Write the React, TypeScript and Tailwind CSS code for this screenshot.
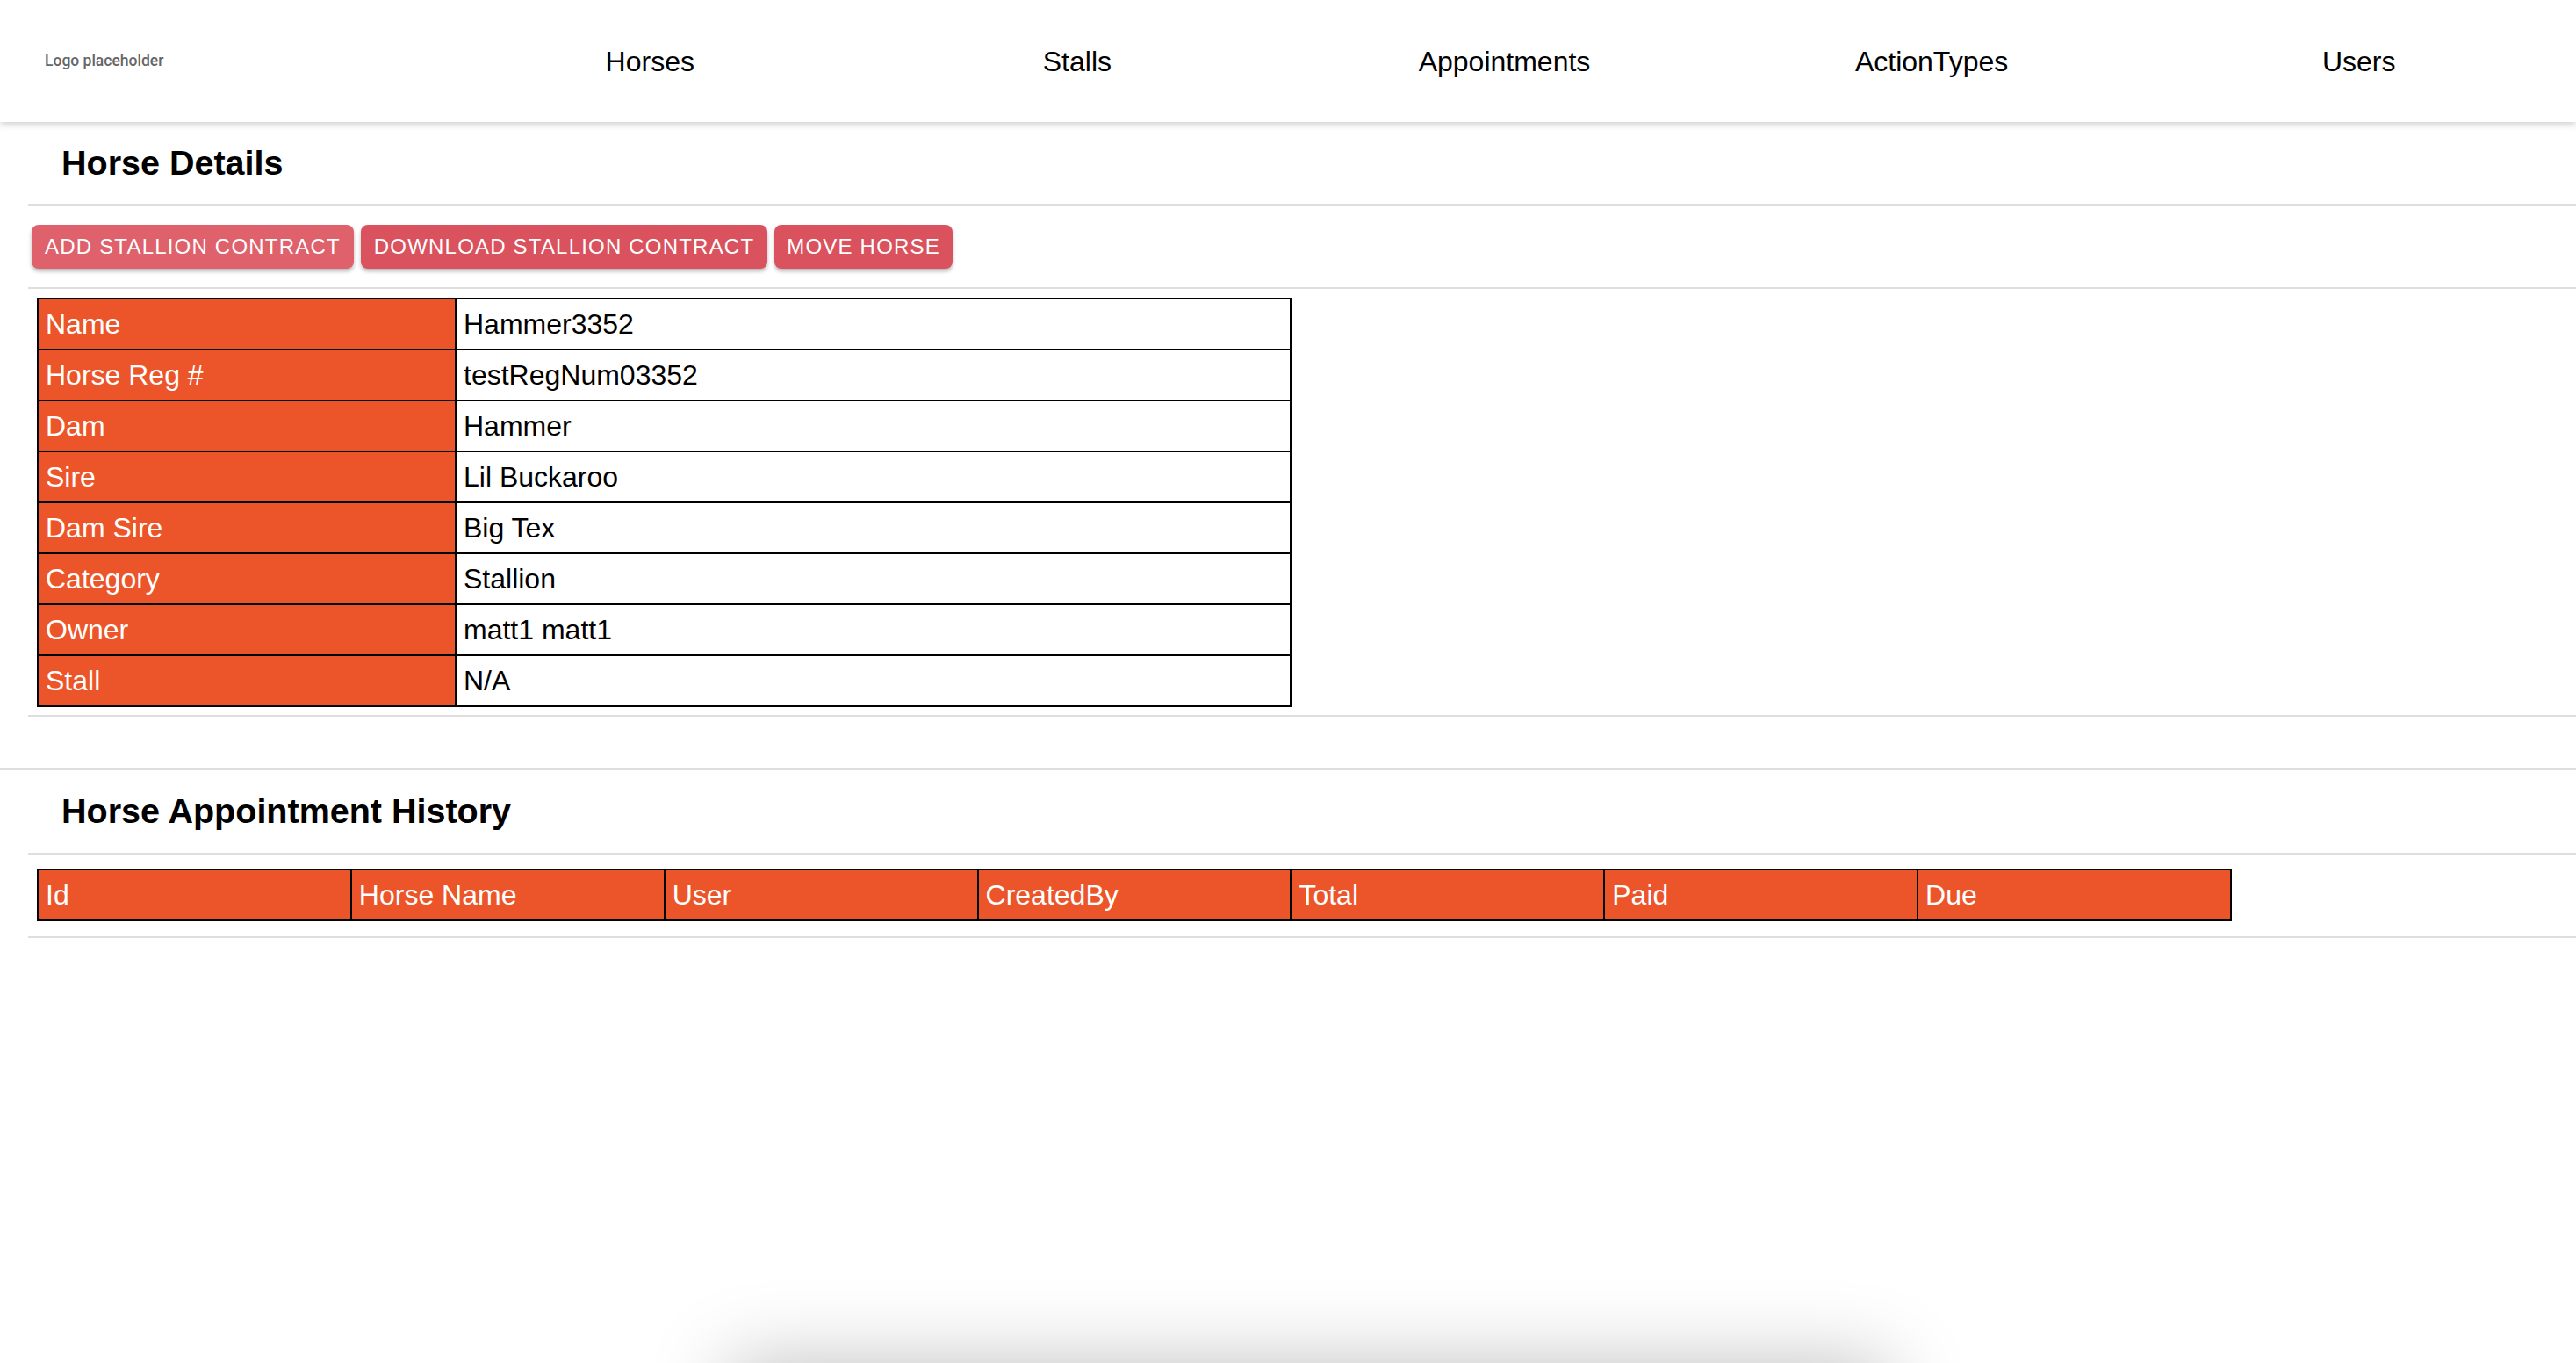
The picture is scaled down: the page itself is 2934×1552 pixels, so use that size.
import React from 'react';

const navItems = ['Horses', 'Stalls', 'Appointments', 'ActionTypes', 'Users'];

const details: [string, string][] = [
  ['Name', 'Hammer3352'],
  ['Horse Reg #', 'testRegNum03352'],
  ['Dam', 'Hammer'],
  ['Sire', 'Lil Buckaroo'],
  ['Dam Sire', 'Big Tex'],
  ['Category', 'Stallion'],
  ['Owner', 'matt1 matt1'],
  ['Stall', 'N/A'],
];

const historyCols = ['Id', 'Horse Name', 'User', 'CreatedBy', 'Total', 'Paid', 'Due'];

const Divider = () => <div className="h-[2px] bg-[#dedede]" />;

const App: React.FC = () => {
  return (
    <div className="min-h-screen bg-white text-black font-['Liberation_Sans',Arial,sans-serif]">
      <header className="relative z-10 h-[139px] flex items-center bg-white shadow-[0_2px_8px_rgba(0,0,0,0.22)]">
        <div className="w-[497px] pl-[51px] font-['Roboto',sans-serif] font-medium text-[17.5px] text-[#666]">
          Logo placeholder
        </div>
        <nav className="flex-1 flex pr-[4px]">
          {navItems.map((item) => (
            <a key={item} className="flex-1 text-center text-[32px] leading-none cursor-pointer">
              {item}
            </a>
          ))}
        </nav>
      </header>

      <main>
        <section className="pl-[32px]">
          <div className="h-[93px] flex items-center pl-[38px]">
            <h2 className="text-[39.5px] font-bold leading-none">Horse Details</h2>
          </div>
          <Divider />
          <div className="h-[93px] flex items-center gap-[8px] pl-[4px]">
            <button className="h-[50px] px-[15px] rounded-[8px] bg-[#de616c] text-white text-[24px] tracking-[1.2px] uppercase shadow-[0_3px_4px_rgba(0,0,0,0.28)]">
              Add Stallion Contract
            </button>
            <button className="h-[50px] px-[15px] rounded-[8px] bg-[#d9525e] text-white text-[24px] tracking-[1.2px] uppercase shadow-[0_3px_4px_rgba(0,0,0,0.28)]">
              Download Stallion Contract
            </button>
            <button className="h-[50px] px-[14px] rounded-[8px] bg-[#d9525e] text-white text-[24px] tracking-[1.2px] uppercase shadow-[0_3px_4px_rgba(0,0,0,0.28)]">
              Move Horse
            </button>
          </div>
          <Divider />
          <div className="pt-[10px] pb-[9px] pl-[10px]">
            <table className="border-collapse w-[1429px] text-[32px]">
              <tbody>
                {details.map(([label, value]) => (
                  <tr key={label} className="h-[58px]">
                    <td className="w-[476px] border-2 border-black bg-[#ec552a] text-white px-[8px] py-0">
                      {label}
                    </td>
                    <td className="border-2 border-black px-[8px] py-0">{value}</td>
                  </tr>
                ))}
              </tbody>
            </table>
          </div>
          <Divider />
        </section>

        <div className="h-[59px]" />
        <Divider />

        <section className="pl-[32px]">
          <div className="h-[94px] flex items-center pl-[38px]">
            <h2 className="text-[39.5px] font-bold leading-none">Horse Appointment History</h2>
          </div>
          <Divider />
          <div className="pt-[16px] pb-[17px] pl-[10px]">
            <table className="border-collapse w-[2500px] text-[32px]">
              <thead>
                <tr className="h-[58px]">
                  {historyCols.map((col) => (
                    <th
                      key={col}
                      className="w-[357px] border-2 border-black bg-[#ec552a] text-white text-left font-normal px-[8px] py-0"
                    >
                      {col}
                    </th>
                  ))}
                </tr>
              </thead>
            </table>
          </div>
          <Divider />
        </section>
      </main>

      <div className="fixed left-[830px] bottom-[-100px] h-[100px] w-[1320px] bg-white shadow-[0_0_90px_rgba(0,0,0,0.25)]" />
    </div>
  );
};

export default App;
